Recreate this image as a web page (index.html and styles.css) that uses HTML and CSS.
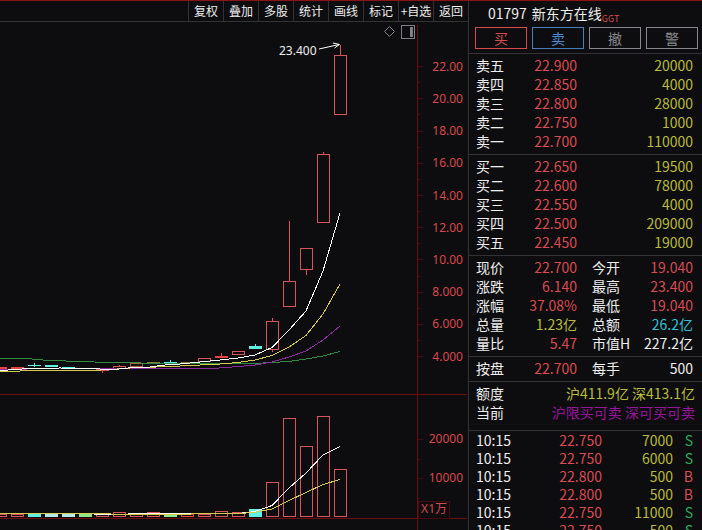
FILE: index.html
```
<!doctype html>
<html lang="zh-CN">
  <head>
    <meta charset="utf-8">
    <title>01797 新东方在线</title>
    <link rel="stylesheet" href="styles.css">
  </head>
  <body>
    <main class="terminal">
      <section class="chart">
        <nav class="toolbar">
          <button type="button">复权</button>
          <button type="button">叠加</button>
          <button type="button">多股</button>
          <button type="button">统计</button>
          <button type="button">画线</button>
          <button type="button">标记</button>
          <button type="button">+自选</button>
          <button type="button">返回</button>
        </nav>
        <svg class="graph" viewBox="0 22 468 508">
          <!-- frame and scale marks -->
          <g class="axis">
            <path d="M417.5 25V530M0 394.5H467M0 518.5H467" />
            <path class="minor" d="M418 66.5h5M418 98.5h5M418 131.5h5M418 163.5h5M418 195.5h5M418 227.5h5M418 259.5h5M418 292.5h5M418 324.5h5M418 356.5h5M418 439.5h5M418 478.5h5" />
            <path class="minor" d="M418 82.5h2M418 114.5h2M418 147.5h2M418 179.5h2M418 211.5h2M418 243.5h2M418 276.5h2M418 308.5h2M418 340.5h2M418 459.5h2M418 498.5h2" />
            <rect class="minor" x="418.5" y="501.5" width="31" height="17" />
          </g>
          <g class="scale">
            <text x="463" y="71">22.00</text>
            <text x="463" y="103">20.00</text>
            <text x="463" y="135">18.00</text>
            <text x="463" y="167">16.00</text>
            <text x="463" y="200">14.00</text>
            <text x="463" y="232">12.00</text>
            <text x="463" y="264">10.00</text>
            <text x="463" y="296">8.000</text>
            <text x="463" y="328">6.000</text>
            <text x="463" y="361">4.000</text>
            <text x="463" y="443">20000</text>
            <text x="463" y="482">10000</text>
            <text x="447" y="513">X1万</text>
          </g>

          <!-- daily candles -->
          <g class="up">
            <path d="M340.5 45V55M323.5 152V154M306.5 270V275M289.5 221V281M272.5 318V321M272.5 350V352M221.5 353V356M119.5 365V367M102.5 371V373" />
            <rect x="334.5" y="55.5" width="12" height="59" />
            <rect x="317.5" y="154.5" width="12" height="68" />
            <rect x="300.5" y="248.5" width="12" height="21" />
            <rect x="283.5" y="281.5" width="12" height="25" />
            <rect x="266.5" y="321.5" width="12" height="28" />
            <rect x="232.5" y="351.5" width="12" height="3" />
            <rect class="solid" x="215.5" y="356.5" width="12" height="1" />
            <rect x="198.5" y="358.5" width="12" height="3" />
            <rect class="olive" x="181.5" y="362.5" width="12" height="1" />
            <rect class="olive" x="147.5" y="362.5" width="12" height="1" />
            <rect class="orange" x="130.5" y="363.5" width="12" height="3" />
            <rect x="113.5" y="366.5" width="12" height="2" />
            <rect x="96.5" y="369.5" width="12" height="1" />
            <rect class="solid" x="11.5" y="367.5" width="12" height="1" />
            <rect class="solid" x="-5.5" y="367.5" width="12" height="1" />
          </g>
          <g class="down">
            <rect x="249" y="346" width="13" height="3" />
            <rect x="255" y="344" width="1" height="2" />
            <rect x="164" y="362" width="13" height="1" />
            <rect x="170" y="360" width="1" height="2" />
            <rect x="79" y="370" width="13" height="1" />
            <rect x="62" y="367" width="13" height="2" />
            <rect x="45" y="365" width="13" height="2" />
            <rect x="28" y="365" width="13" height="1" />
            <rect x="34" y="363" width="1" height="4" />
          </g>
          <g class="average">
            <polyline class="green" points="0,358.5 26,358.5 43,360 77,361.5 111,362.5 170,363.5 255,363.5 272,362.5 289,361.5 306,359 323,356 340,351.5" />
            <polyline class="purple" points="0,370 27,369 213,368.5 238,366.5 255,365 272,362 289,357 306,351 323,340 340,326" />
            <polyline class="yellow" points="0,371.5 13,371.5 27,370.5 92,370.5 111,369.5 130,368 170,366.5 200,365 220,364 238,362.5 255,360 272,355.5 289,347 306,335.5 323,314 340,284" />
            <polyline class="white" points="0,370.5 17,369.5 27,368.5 60,368 94,368.5 111,370 128,368 150,367 165,365 180,364 200,362 220,360 238,358 255,355 272,347.5 289,330 306,311 323,271 340,213" />
          </g>

          <!-- volume -->
          <g class="up">
            <rect x="334.5" y="469.5" width="12" height="47" />
            <rect x="317.5" y="416.5" width="12" height="100" />
            <rect x="300.5" y="446.5" width="12" height="70" />
            <rect x="283.5" y="418.5" width="12" height="98" />
            <rect x="266.5" y="482.5" width="12" height="34" />
            <rect x="232.5" y="512.5" width="12" height="4" />
            <rect x="215.5" y="511.5" width="12" height="5" />
            <rect x="198.5" y="514.5" width="12" height="2" />
            <rect class="solid" x="181.5" y="514.5" width="12" height="2" />
            <rect x="147.5" y="512.5" width="12" height="4" />
            <rect x="130.5" y="513.5" width="12" height="3" />
            <rect x="113.5" y="512.5" width="12" height="4" />
            <rect x="96.5" y="514.5" width="12" height="2" />
            <rect x="11.5" y="514.5" width="12" height="2" />
            <rect x="-5.5" y="514.5" width="12" height="2" />
          </g>
          <g class="down">
            <rect x="249" y="509" width="13" height="8" />
            <rect class="lime" x="164" y="514" width="13" height="3" />
            <rect class="lime" x="79" y="514" width="13" height="3" />
            <rect class="pale" x="62" y="514" width="13" height="3" />
            <rect class="pale" x="45" y="514" width="13" height="3" />
            <rect x="28" y="514" width="13" height="3" />
          </g>
          <g class="average">
            <polyline class="white" points="43,513.5 77,513.5 111,514.5 145,513.5 212,513.5 238,513.5 255,511.5 272,505.5 289,488 306,473 323,455 340,446.5" />
            <polyline class="yellow" points="0,513.5 77,513.5 145,514.5 238,513.5 255,512.5 272,509 289,500.5 306,492.5 323,484.5 340,479.5" />
          </g>

          <!-- highest price marker -->
          <text class="peak" x="279" y="55">23.400</text>
          <path class="arrow" d="M319 49L339 44.5M333 43L339.5 44.5L334.5 48" />

          <!-- window controls -->
          <g class="control">
            <path d="M389.5 26.5L394.5 31.5L389.5 36.5L384.5 31.5Z" />
            <rect x="401.5" y="25.5" width="13" height="13" />
            <rect class="fill" x="410" y="27" width="3" height="10" />
          </g>
        </svg>
      </section>

      <aside class="quote">
        <header class="head">
          <h1><span>01797</span> <span>新东方在线</span><small>GGT</small></h1>
          <div class="actions">
            <button type="button" class="buy">买</button>
            <button type="button" class="sell">卖</button>
            <button type="button">撤</button>
            <button type="button">警</button>
          </div>
        </header>

        <table>
          <tr><th>卖五</th><td class="price">22.900</td><td>20000</td></tr>
          <tr><th>卖四</th><td class="price">22.850</td><td>4000</td></tr>
          <tr><th>卖三</th><td class="price">22.800</td><td>28000</td></tr>
          <tr><th>卖二</th><td class="price">22.750</td><td>1000</td></tr>
          <tr><th>卖一</th><td class="price">22.700</td><td>110000</td></tr>
        </table>

        <table>
          <tr><th>买一</th><td class="price">22.650</td><td>19500</td></tr>
          <tr><th>买二</th><td class="price">22.600</td><td>78000</td></tr>
          <tr><th>买三</th><td class="price">22.550</td><td>4000</td></tr>
          <tr><th>买四</th><td class="price">22.500</td><td>209000</td></tr>
          <tr><th>买五</th><td class="price">22.450</td><td>19000</td></tr>
        </table>

        <table class="stats">
          <tr><th>现价</th><td class="price">22.700</td><th>今开</th><td class="price">19.040</td></tr>
          <tr><th>涨跌</th><td class="price">6.140</td><th>最高</th><td class="price">23.400</td></tr>
          <tr><th>涨幅</th><td class="price">37.08%</td><th>最低</th><td class="price">19.040</td></tr>
          <tr><th>总量</th><td>1.23亿</td><th>总额</th><td class="cyan">26.2亿</td></tr>
          <tr><th>量比</th><td class="price">5.47</td><th>市值H</th><td class="plain">227.2亿</td></tr>
        </table>

        <table class="stats">
          <tr><th>按盘</th><td class="price">22.700</td><th>每手</th><td class="plain">500</td></tr>
        </table>

        <table class="quota">
          <tr><th>额度</th><td>沪411.9亿 深413.1亿</td></tr>
          <tr><th>当前</th><td class="status">沪限买可卖 深可买可卖</td></tr>
        </table>

        <table class="trades">
          <tr><th>10:15</th><td class="price">22.750</td><td>7000</td><td class="sold">S</td></tr>
          <tr><th>10:15</th><td class="price">22.750</td><td>6000</td><td class="sold">S</td></tr>
          <tr><th>10:15</th><td class="price">22.800</td><td>500</td><td class="price">B</td></tr>
          <tr><th>10:15</th><td class="price">22.800</td><td>500</td><td class="price">B</td></tr>
          <tr><th>10:15</th><td class="price">22.750</td><td>11000</td><td class="sold">S</td></tr>
          <tr><th>10:15</th><td class="price">22.750</td><td>500</td><td class="sold">S</td></tr>
        </table>
      </aside>
    </main>
  </body>
</html>
```
FILE: styles.css
```
* {
  box-sizing: border-box;
}

body {
  margin: 0;
  background: #0d0d0f;
  color: #eee;
  font-family: "Noto Sans CJK SC", sans-serif;
  font-size: 14px;
}

button {
  margin: 0;
  padding: 0;
  background: none;
  color: inherit;
  font-family: inherit;
  cursor: pointer;
}

.terminal {
  display: flex;
  height: 100vh;
  overflow: hidden;
  border-top: 1px solid #8c1216;
}

/* chart */

.chart {
  flex: 1;
  min-width: 0;
}

.toolbar {
  display: flex;
  justify-content: flex-end;
  height: 21px;
  border-bottom: 1px solid #333336;
}

.toolbar button {
  width: 35px;
  border: 0;
  border-left: 1px solid #333336;
  font-size: 12px;
  line-height: 18px;
  white-space: nowrap;
}

.graph {
  display: block;
  width: 100%;
  font-family: "Noto Sans", "Noto Sans CJK SC", sans-serif;
  font-size: 12px;
}

.graph path, .graph rect, .graph polyline {
  fill: none;
  shape-rendering: crispEdges;
}

.axis {
  stroke: #6e0c10;
}

.axis .minor {
  stroke: #4a0a0d;
}

.scale {
  fill: #d8484e;
  text-anchor: end;
}

.up {
  stroke: #d8545a;
}

.up .solid {
  stroke: #e8453f;
}

.up .olive {
  stroke: #8a7a3c;
}

.up .orange {
  stroke: #a8683a;
}

.graph .down rect {
  fill: #5ff0e4;
}

.graph .down .lime {
  fill: #8fe88a;
}

.graph .down .pale {
  fill: #b4ecec;
}

.average .white {
  stroke: #fff;
}

.average .yellow {
  stroke: #d6cb4a;
}

.average .purple {
  stroke: #8a2a9c;
}

.average .green {
  stroke: #2f8c40;
}

.peak {
  fill: #eee;
}

.graph .arrow {
  stroke: #fff;
  shape-rendering: auto;
}

.control {
  stroke: #808084;
}

.graph .control path {
  shape-rendering: auto;
}

.graph .control .fill {
  fill: #808084;
  stroke: none;
}

/* quote panel */

.quote {
  flex: none;
  width: 234px;
  border-left: 1px solid #333336;
}

.head {
  height: 52px;
  padding: 2px 4px 0 6px;
}

h1 {
  display: flex;
  margin: 0 0 4px;
  padding-left: 13px;
  font-size: 14px;
  font-weight: normal;
  line-height: 20px;
}

h1 span + span {
  margin-left: 5px;
}

h1 small {
  align-self: flex-end;
  color: #d8484e;
  font-size: 9px;
  line-height: 8px;
}

.actions {
  display: flex;
  gap: 5px;
}

.actions button {
  flex: 1;
  height: 22px;
  border: 1px solid #88888c;
  color: #88888c;
  font-size: 14px;
  line-height: 20px;
}

.actions .buy {
  border-color: #d8484e;
  color: #d8484e;
}

.actions .sell {
  border-color: #4a7fbe;
  color: #4a8ad0;
}

table {
  display: block;
  padding: 2px 9px 3px 7px;
  border-top: 1px solid #333336;
}

tbody {
  display: block;
}

tr {
  display: grid;
  grid-template-columns: 40px 61px 1fr;
  height: 19px;
  line-height: 19px;
  white-space: nowrap;
}

th, td {
  padding: 0;
}

th {
  font-weight: normal;
  text-align: left;
}

td {
  color: #b8bc3a;
  text-align: right;
}

.stats tr {
  grid-template-columns: 40px 61px 55px 1fr;
}

.stats td + th {
  padding-left: 15px;
}

.quota {
  padding-right: 7px;
  padding-bottom: 8px;
}

.quota tr {
  grid-template-columns: 40px 1fr;
}

.trades {
  padding-top: 0;
}

.trades tr {
  grid-template-columns: 40px 86px 71px 1fr;
  height: 18px;
  line-height: 18px;
}

.price {
  color: #dc4a52;
}

.plain {
  color: #eee;
}

.cyan {
  color: #2cc4d4;
}

.status {
  color: #98149c;
}

.sold {
  color: #2faa58;
}
```
